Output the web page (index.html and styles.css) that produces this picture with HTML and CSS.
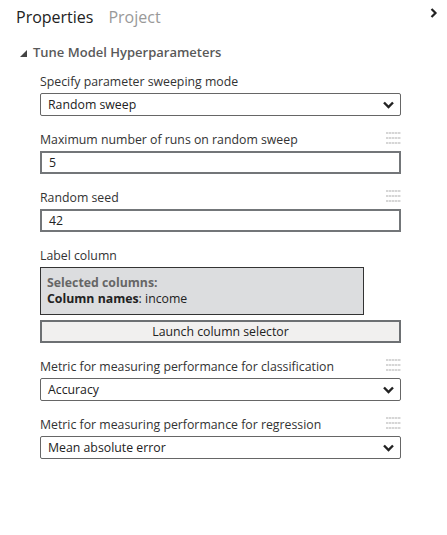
FILE: index.html
```html
<!DOCTYPE html>
<html>
  <head>
    <title>Properties</title>
    <link rel="stylesheet" href="styles.css">
  </head>
  <body>
    <div class="panel">
      <div class="tabs">
        <span class="tab active">Properties</span>
        <span class="tab">Project</span>
        <svg class="collapse" width="8" height="10" viewBox="0 0 8 10">
          <path d="M1.5 1 L5.5 5 L1.5 9" fill="none" stroke="#222" stroke-width="2.2" />
        </svg>
      </div>

      <div class="section">
        <svg class="caret" width="7" height="7" viewBox="0 0 7 7">
          <path d="M7 0 L7 7 L0 7 Z" fill="#444" />
        </svg>
        <span>Tune Model Hyperparameters</span>
      </div>

      <div class="fields">
        <div class="field">
          <div class="label">Specify parameter sweeping mode</div>
          <div class="select">
            <span>Random sweep</span>
            <svg width="11" height="8" viewBox="0 0 11 8"><path d="M1 1.5 L5.5 6 L10 1.5" fill="none" stroke="#222" stroke-width="2.4" /></svg>
          </div>
        </div>

        <div class="field">
          <div class="label">Maximum number of runs on random sweep <i class="sweep"><b></b><b></b><b></b></i></div>
          <div class="input">5</div>
        </div>

        <div class="field">
          <div class="label">Random seed <i class="sweep"><b></b><b></b><b></b></i></div>
          <div class="input">42</div>
        </div>

        <div class="field">
          <div class="label">Label column</div>
          <div class="columns">
            <div class="muted">Selected columns:</div>
            <div><strong>Column names</strong>: income</div>
          </div>
          <button class="launch">Launch column selector</button>
        </div>

        <div class="field">
          <div class="label">Metric for measuring performance for classification <i class="sweep"><b></b><b></b><b></b></i></div>
          <div class="select">
            <span>Accuracy</span>
            <svg width="11" height="8" viewBox="0 0 11 8"><path d="M1 1.5 L5.5 6 L10 1.5" fill="none" stroke="#222" stroke-width="2.4" /></svg>
          </div>
        </div>

        <div class="field">
          <div class="label">Metric for measuring performance for regression <i class="sweep"><b></b><b></b><b></b></i></div>
          <div class="select">
            <span>Mean absolute error</span>
            <svg width="11" height="8" viewBox="0 0 11 8"><path d="M1 1.5 L5.5 6 L10 1.5" fill="none" stroke="#222" stroke-width="2.4" /></svg>
          </div>
        </div>
      </div>
    </div>
  </body>
</html>
```

FILE: styles.css
```css
body {
  margin: 0;
  background: #fff;
  font-family: "Open Sans", "Noto Sans", sans-serif;
  color: #333;
}

.panel {
  width: 447px;
  height: 535px;
}

.tabs {
  display: flex;
  align-items: center;
  gap: 15px;
  padding: 5px 0 0 16px;
  height: 24px;
  font-size: 16px;
}

.tab {
  color: #999;
}

.tab.active {
  color: #222;
}

.collapse {
  margin-left: auto;
  margin-right: 9px;
  align-self: flex-start;
  margin-top: 3px;
}

.section {
  display: flex;
  align-items: center;
  gap: 6px;
  margin-top: 14px;
  padding-left: 20px;
  font-size: 13px;
  font-weight: 600;
  color: #595959;
}

.caret {
  margin-top: 2px;
}

.fields {
  padding: 10px 46px 0 40px;
}

.field {
  margin-bottom: 13px;
}

.label {
  display: flex;
  align-items: center;
  justify-content: space-between;
  font-size: 12.3px;
  color: #333;
  height: 20px;
  margin-bottom: 2px;
}

.sweep {
  display: flex;
  flex-direction: column;
  gap: 3px;
  width: 15px;
  margin-top: -3px;
}

.sweep b {
  display: block;
  height: 2px;
  background: repeating-linear-gradient(90deg, #d6d6d6 0 2px, #ececec 2px 3px);
}

.select {
  display: flex;
  align-items: center;
  justify-content: space-between;
  height: 21px;
  border: 1px solid #666;
  border-radius: 2px;
  padding: 0 6px 0 7px;
  font-size: 12.3px;
  color: #222;
}

.input {
  height: 19px;
  line-height: 20px;
  border: 2px solid #737679;
  padding-left: 7px;
  font-size: 12.3px;
  color: #222;
}

.columns {
  width: 310px;
  border: 1px solid #333;
  background: #dcdddf;
  padding: 7px 6px 7px;
  font-size: 12.3px;
  line-height: 16px;
  color: #222;
}

.columns .muted {
  font-weight: 700;
  color: #666;
}

.columns strong {
  font-weight: 700;
}

.launch {
  display: block;
  width: 100%;
  height: 23px;
  margin-top: 5px;
  border: 2px solid #6d7073;
  background: #f1f0ef;
  font-family: "Open Sans", "Noto Sans", sans-serif;
  font-size: 12.3px;
  color: #222;
  padding: 0;
}
```
